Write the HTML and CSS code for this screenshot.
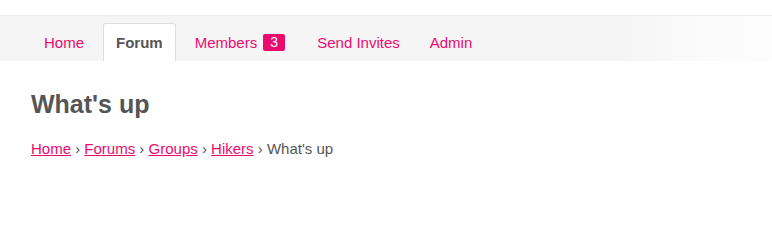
FILE: index.html
```html
<!DOCTYPE html>
<html>
<head>
<meta charset="utf-8">
<link rel="stylesheet" href="styles.css">
</head>
<body>
<nav class="tabs">
  <ul class="tab-list">
    <li class="tab"><a href="#">Home</a></li>
    <li class="tab active"><a href="#">Forum</a></li>
    <li class="tab"><a href="#">Members <span class="badge">3</span></a></li>
    <li class="tab"><a href="#">Send Invites</a></li>
    <li class="tab"><a href="#">Admin</a></li>
  </ul>
</nav>
<main class="content">
  <h1 class="title">What's up</h1>
  <div class="crumbs"><a href="#">Home</a> › <a href="#">Forums</a> › <a href="#">Groups</a> › <a href="#">Hikers</a> › What's up</div>
</main>
</body>
</html>
```
FILE: styles.css
```css
html, body {
  margin: 0;
  padding: 0;
  background: #fff;
  font-family: "Liberation Sans", Arial, sans-serif;
  color: #555;
}
.tabs {
  margin-top: 15px;
  border-top: 1px solid #ececec;
  background: linear-gradient(90deg, #f5f5f5 0%, #f5f5f5 81%, #fafafa 90%, #fdfdfd 100%);
  height: 46px;
  box-sizing: border-box;
  padding: 7px 0 0 31px;
}
.tab-list {
  list-style: none;
  margin: 0;
  padding: 0;
  display: flex;
  gap: 6px;
}
.tab {
  height: 38px;
  box-sizing: border-box;
  border: 1px solid transparent;
  border-bottom: 0;
  border-radius: 3px 3px 0 0;
  padding: 0 12px;
  display: flex;
  align-items: center;
  font-size: 15px;
}
.tab:last-child {
  margin-left: -2px;
}
.tab a {
  color: #ec0a6f;
  text-decoration: none;
  display: flex;
  align-items: center;
}
.tab.active {
  background: #fff;
  border-color: #dedede;
}
.tab.active a {
  color: #555;
  font-weight: bold;
}
.badge {
  display: inline-block;
  background: #ec0a6f;
  color: #fff;
  border-radius: 2px;
  width: 22px;
  height: 17px;
  line-height: 17px;
  text-align: center;
  font-size: 14px;
  margin-left: 6px;
}
.content {
  padding: 0 31px;
}
.title {
  margin: 28px 0 0;
  font-size: 25px;
  font-weight: bold;
  line-height: 30px;
  color: #555;
}
.crumbs {
  margin-top: 21px;
  font-size: 15px;
  line-height: 18px;
  color: #555;
}
.crumbs a {
  color: #ec0a6f;
  text-decoration: underline;
}
```
